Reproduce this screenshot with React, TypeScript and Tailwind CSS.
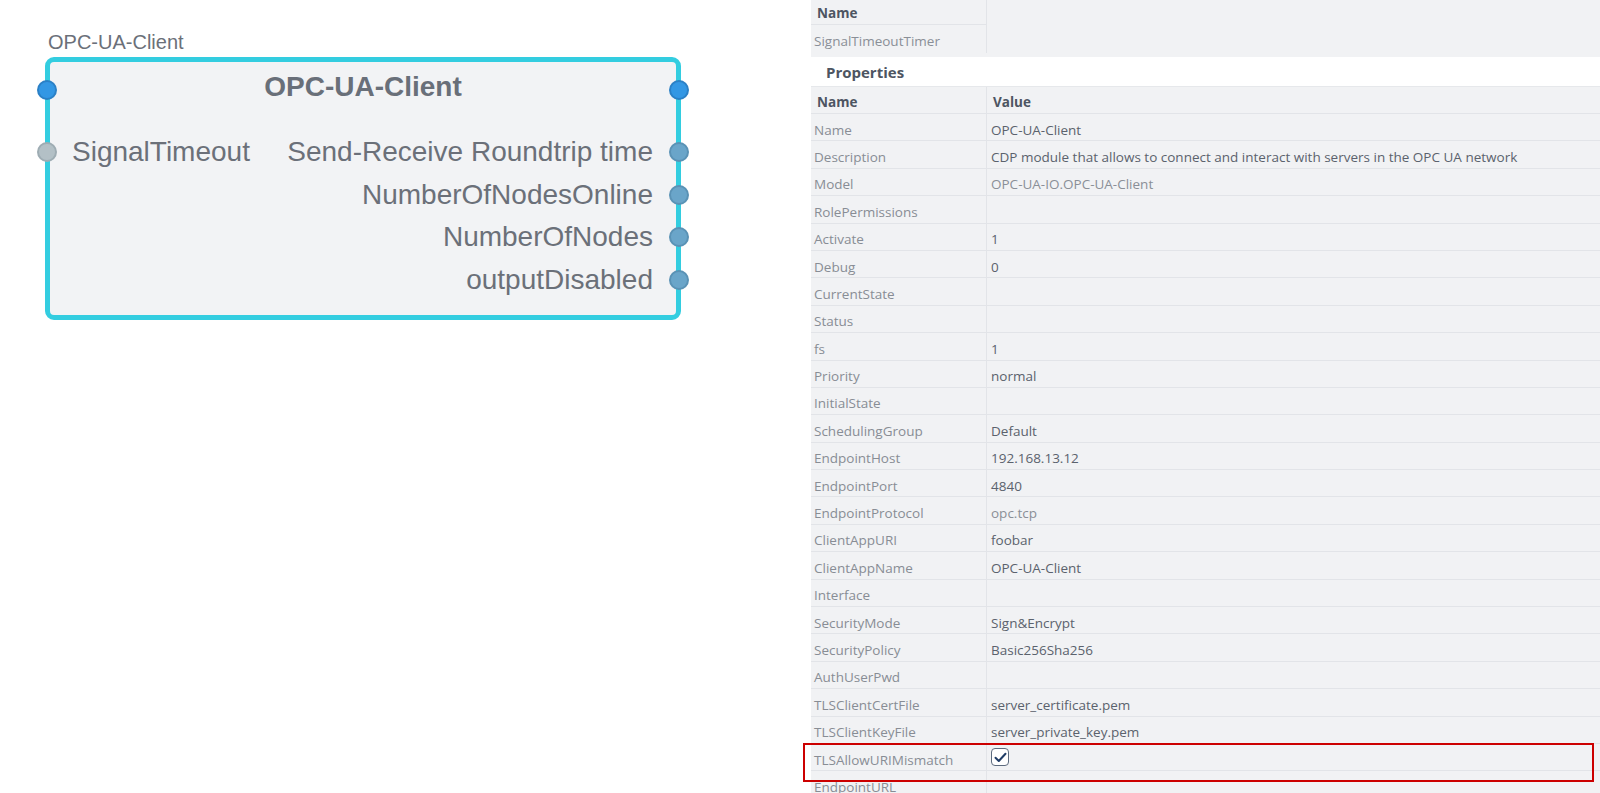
import React from "react";

const rows: { n: string; v: string; light?: boolean; check?: boolean }[] = [
  { n: "Name", v: "OPC-UA-Client" },
  { n: "Description", v: "CDP module that allows to connect and interact with servers in the OPC UA network" },
  { n: "Model", v: "OPC-UA-IO.OPC-UA-Client", light: true },
  { n: "RolePermissions", v: "" },
  { n: "Activate", v: "1" },
  { n: "Debug", v: "0" },
  { n: "CurrentState", v: "" },
  { n: "Status", v: "" },
  { n: "fs", v: "1" },
  { n: "Priority", v: "normal" },
  { n: "InitialState", v: "" },
  { n: "SchedulingGroup", v: "Default" },
  { n: "EndpointHost", v: "192.168.13.12" },
  { n: "EndpointPort", v: "4840" },
  { n: "EndpointProtocol", v: "opc.tcp", light: true },
  { n: "ClientAppURI", v: "foobar" },
  { n: "ClientAppName", v: "OPC-UA-Client" },
  { n: "Interface", v: "" },
  { n: "SecurityMode", v: "Sign&Encrypt" },
  { n: "SecurityPolicy", v: "Basic256Sha256" },
  { n: "AuthUserPwd", v: "" },
  { n: "TLSClientCertFile", v: "server_certificate.pem" },
  { n: "TLSClientKeyFile", v: "server_private_key.pem" },
  { n: "TLSAllowURIMismatch", v: "", check: true },
  { n: "EndpointURL", v: "" },
];

const outputs = ["Send-Receive Roundtrip time", "NumberOfNodesOnline", "NumberOfNodes", "outputDisabled"];

function Port({ kind }: { kind: "blue" | "grey" | "out" }) {
  const cls =
    kind === "blue"
      ? "bg-[#3397e4] border-[#2b80c6]"
      : kind === "grey"
      ? "bg-[#b3c0c6] border-[#9eacb3]"
      : "bg-[#6aa5c9] border-[#5a92b5]";
  return <div className={`w-[20px] h-[20px] rounded-full border-2 ${cls}`} />;
}

export default function App() {
  return (
    <div
      className="relative flex w-[1600px] h-[793px] overflow-hidden bg-white"
      style={{ fontFamily: "'Open Sans', 'Noto Sans', sans-serif" }}
    >
      {/* Canvas */}
      <div className="relative w-[811px] h-full bg-white" style={{ fontFamily: "'Liberation Sans', Arial, sans-serif" }}>
        <div className="absolute left-[45px] top-[29px] w-[636px]">
          <div className="h-[28px] pl-[3px] pt-[1px] text-[20px] leading-[24px] text-[#6b7079]">OPC-UA-Client</div>
          <div className="relative h-[263px] rounded-[9px] border-[5px] border-[#33cde0] bg-[#f2f3f5]">
            <div className="absolute -left-[13px] top-[18px]"><Port kind="blue" /></div>
            <div className="absolute -right-[13px] top-[18px]"><Port kind="blue" /></div>
            <div className="pt-[6px] text-center text-[28px] leading-[38px] font-bold text-[#696f79]">OPC-UA-Client</div>
            <div className="flex justify-between mt-[25px] pl-[22px] pr-[23px]">
              <div className="flex items-center h-[42px] relative">
                <div className="absolute -left-[35px] top-[11px]"><Port kind="grey" /></div>
                <span className="text-[28px] text-[#6b7079]">SignalTimeout</span>
              </div>
              <div className="flex flex-col items-end">
                {outputs.map((o) => (
                  <div key={o} className="relative flex items-center h-[42.5px]">
                    <span className="text-[28px] text-[#6b7079]">{o}</span>
                    <div className="absolute -right-[36px] top-[11px]"><Port kind="out" /></div>
                  </div>
                ))}
              </div>
            </div>
          </div>
        </div>
      </div>

      {/* Property panel */}
      <div className="flex-1 h-full bg-[#f1f2f4] text-[13.5px]">
        <div className="w-[176px] border-r border-[#e2e4e8]">
          <div className="h-[25px] flex items-center pl-[6px] pt-[3px] border-b border-[#e2e4e8] font-bold text-[#4d5562]">Name</div>
          <div className="h-[28px] flex items-center pl-[3px] pt-[4px] text-[#8a8f97]">SignalTimeoutTimer</div>
        </div>
        <div className="h-[4px]" />
        <div className="h-[30px] bg-white flex items-center pl-[15px] pt-[2px] font-bold text-[15px] text-[#4d5562] border-b border-[#e6e8eb]">
          Properties
        </div>
        <div className="flex h-[27px] border-b border-[#e2e4e8] font-bold text-[#4d5562]">
          <div className="w-[176px] flex items-center pl-[6px] pt-[5px] border-r border-[#e2e4e8]">Name</div>
          <div className="flex-1 flex items-center pl-[6px] pt-[5px]">Value</div>
        </div>
        {rows.map((r) => (
          <div key={r.n} className="flex h-[27.4px] border-b border-[#e2e4e8]">
            <div className="w-[176px] flex items-center pl-[3px] pt-[5px] border-r border-[#e2e4e8] text-[#888d95] whitespace-nowrap overflow-hidden">
              {r.n}
            </div>
            <div className={`flex-1 flex items-center pl-[4px] whitespace-nowrap ${r.check ? "" : "pt-[5px]"} ${r.light ? "text-[#8a8f97]" : "text-[#5b626d]"}`}>
              {r.check ? (
                <div className="w-[18px] h-[18px] rounded-[4px] border-[1.5px] border-[#5d6b7e] bg-white flex items-center justify-center">
                  <svg width="13" height="11" viewBox="0 0 13 11">
                    <path d="M1.5 5.8 L4.8 9 L11.5 1.8" fill="none" stroke="#1f3c66" strokeWidth="2" strokeLinecap="round" strokeLinejoin="round" />
                  </svg>
                </div>
              ) : (
                r.v
              )}
            </div>
          </div>
        ))}
      </div>

      {/* Annotation highlight */}
      <div className="absolute left-[803px] top-[743px] w-[791px] h-[39px] border-2 border-[#cc0000] pointer-events-none" />
    </div>
  );
}
